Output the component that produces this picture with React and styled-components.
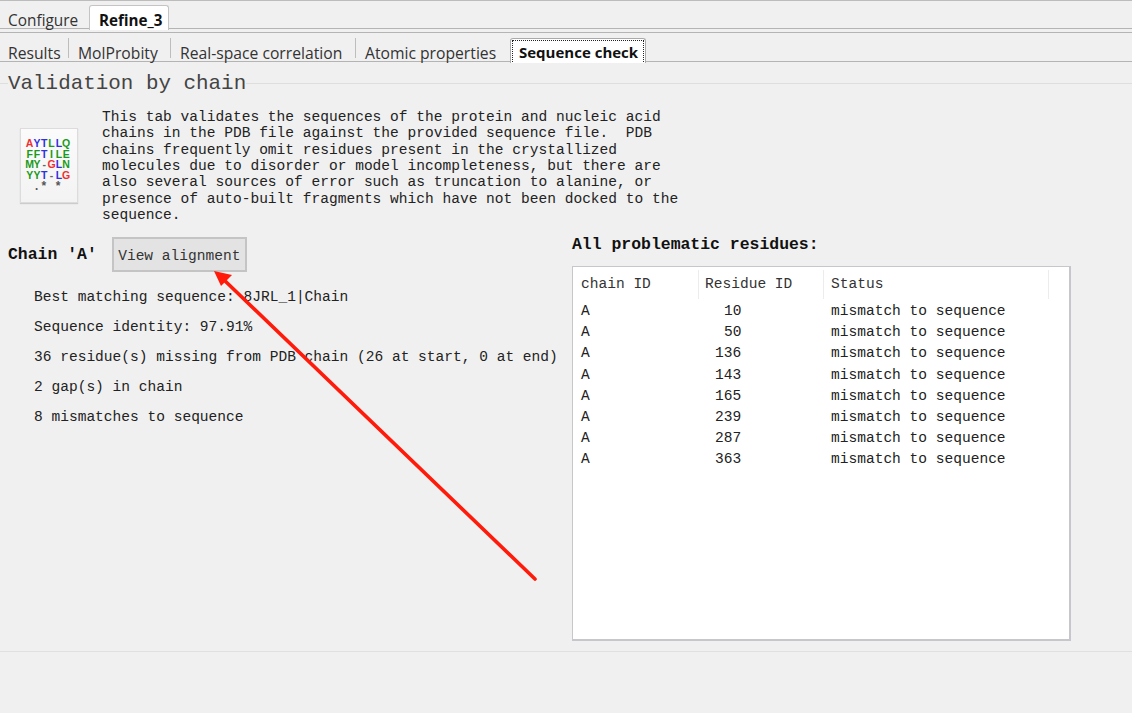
import React from "react";
import styled, { createGlobalStyle } from "styled-components";

const Global = createGlobalStyle`
  html, body { margin: 0; padding: 0; background: #f0f0f0; }
  * { box-sizing: border-box; }
`;
const Page = styled.div`
  position: relative; width: 1132px; height: 713px; overflow: hidden;
  background: #f0f0f0; font-family: "Liberation Mono", monospace; font-size: 14.55px; color: #222;
`;
const MainBar = styled.div`
  display: flex; align-items: flex-end; height: 29px;
  border-top: 1px solid #bcbcbc; border-bottom: 1px solid #b4b4b4;
  font-family: "Open Sans", sans-serif; font-size: 15.4px;
`;
const MainTab = styled.div`
  width: 89px; height: 22px; padding: 5px 0 0 8px; line-height: 20px; color: #333;
`;
const ActiveMainTab = styled.div`
  width: 80px; height: 25px; margin-bottom: -2px; padding: 4px 0 0 9px; line-height: 20px;
  font-weight: 700; font-size: 15.2px; color: #111;
  background: #fff; border: 1px solid #c4c4c4; border-bottom: 0; border-radius: 3px 3px 0 0;
`;
const SubBar = styled.div`
  display: flex; align-items: flex-end; height: 30px; margin-top: 3px;
  border-top: 1px solid #b4b4b4; border-bottom: 1px solid #b4b4b4;
  font-family: "Open Sans", sans-serif; font-size: 15.7px;
`;
const SubTab = styled.div`
  position: relative; height: 23px; padding: 5px 0 0 0; line-height: 21px; color: #333;
  width: ${p => p.$w}px; padding-left: ${p => p.$pad}px; white-space: nowrap;
  &::after { content: ""; position: absolute; right: 0; top: 0; height: 20px; width: 1px; background: #bdbdbd; }
  &:nth-child(4)::after { display: none; }
`;
const ActiveSubTab = styled.div`
  width: 136px; height: 25px; margin-bottom: -2px; padding: 1px; background: #fff;
  border: 1px solid #aaa; border-bottom: 0; border-radius: 3px 3px 0 0;
  font-weight: 700; font-size: 15px; color: #111;
`;
const FocusRing = styled.div`
  height: 100%; padding: 2px 0 0 6px; line-height: 19px; white-space: nowrap;
  border: 1px dotted #222; border-bottom: 0;
`;
const SectionHead = styled.div`
  display: flex; align-items: center; height: 41px; padding-top: 2px;
  &::before { content: ""; width: 8px; height: 1px; background: #dedede; }
  &::after { content: ""; flex: 1; height: 1px; background: #dedede; }
`;
const SectionTitle = styled.h2`
  margin: 0; font-family: "Liberation Mono", monospace; font-weight: 400; font-size: 20.9px; color: #444; line-height: 24px;
`;
const Intro = styled.div`
  display: flex; align-items: flex-start; padding: 6px 0 0 20px; height: 134px;
`;
const SeqIcon = styled.div`
  width: 58px; height: 75px; margin: 19px 24px 0 0; padding: 9px 0 0 5px; background: linear-gradient(#fbfbfb,#f3f3f3);
  border: 1px solid #dcdcdc; box-shadow: 0 1px 1px #ccc;
  font-family: "Liberation Sans", sans-serif; font-weight: 700; font-size: 10.5px; line-height: 10.5px;
`;
const SeqRow = styled.div`
  display: grid; grid-template-columns: repeat(6, 7.3px); justify-items: center;
`;
const Res = styled.span`
  color: ${p => p.$c};
`;
const Stars = styled.div`
  font-family: "Liberation Mono", monospace; font-weight: 700; font-size: 12px; color: #555; padding: 2px 0 0 7px; white-space: pre; line-height: 11px;
`;
const IntroText = styled.p`
  margin: 0; width: 600px; line-height: 16.33px; font-size: 14.55px; white-space: pre; color: #222;
`;
const Columns = styled.div`
  display: grid; grid-template-columns: 572px 499px; height: 415px; border-bottom: 1px solid #e0e0e0;
`;
const LeftCol = styled.div`
  padding-left: 8px;
`;
const ChainRow = styled.div`
  display: flex; align-items: center; gap: 15px; height: 35px;
`;
const ChainLabel = styled.strong`
  font-size: 16.45px; color: #111; margin-top: -1px; white-space: nowrap;
`;
const AlignButton = styled.button`
  width: 135px; height: 35px; padding: 2px 0 0; background: #e3e3e3; border: 2px solid #c4c4c4;
  font: inherit; color: #333;
`;
const Facts = styled.div`
  padding: 10px 0 0 26px;
`;
const Fact = styled.div`
  height: 30px; line-height: 30px; white-space: nowrap;
`;
const RightCol = styled.div`
  display: flex; flex-direction: column;
`;
const TableTitle = styled.strong`
  height: 29px; line-height: 16px; font-size: 16.45px; color: #111; white-space: nowrap;
`;
const Table = styled.div`
  height: 375px; background: #fff; border: solid #c6c6cc; border-width: 1px 2px 2px 1px; padding-top: 3px;
`;
const HeadRow = styled.div`
  display: grid; grid-template-columns: 126px 125px 225px; height: 31px;
`;
const BodyRow = styled.div`
  display: grid; grid-template-columns: 126px 125px 225px; height: 21.2px; line-height: 21.2px;
`;
const HeadCell = styled.div`
  height: 29px; padding-left: ${p => p.$pad}px; border-right: 1px solid #ececec; color: #333; line-height: 29px;
`;
const Cell = styled.div`
  padding-left: ${p => p.$pad}px; color: #222;
`;
const ArrowLayer = styled.svg`
  position: absolute; left: 0; top: 0; pointer-events: none;
`;

const R = "#f03030", B = "#3030e0", G = "#1a9a1a", D = "#666";
const rows = [
  [["A",R],["Y",B],["T",B],["L",G],["L",B],["Q",G]],
  [["F",G],["F",G],["T",B],["I",G],["L",G],["E",G]],
  [["M",G],["Y",G],["-",D],["G",R],["L",B],["N",G]],
  [["Y",G],["Y",G],["T",B],["-",D],["L",B],["G",R]],
];
const residues = [10, 50, 136, 143, 165, 239, 287, 363];
const facts = [
  "Best matching sequence: 8JRL_1|Chain",
  "Sequence identity: 97.91%",
  "36 residue(s) missing from PDB chain (26 at start, 0 at end)",
  "2 gap(s) in chain",
  "8 mismatches to sequence",
];
const intro = `This tab validates the sequences of the protein and nucleic acid
chains in the PDB file against the provided sequence file.  PDB
chains frequently omit residues present in the crystallized
molecules due to disorder or model incompleteness, but there are
also several sources of error such as truncation to alanine, or
presence of auto-built fragments which have not been docked to the
sequence.`;

export default function App() {
  return (
    <Page>
      <Global />
      <MainBar>
        <MainTab>Configure</MainTab>
        <ActiveMainTab>Refine_3</ActiveMainTab>
      </MainBar>
      <SubBar>
        <SubTab $w={69} $pad={8}>Results</SubTab>
        <SubTab $w={102} $pad={9}>MolProbity</SubTab>
        <SubTab $w={185} $pad={9}>Real-space correlation</SubTab>
        <SubTab $w={154} $pad={9}>Atomic properties</SubTab>
        <ActiveSubTab><FocusRing>Sequence check</FocusRing></ActiveSubTab>
      </SubBar>
      <SectionHead><SectionTitle>Validation by chain</SectionTitle></SectionHead>
      <Intro>
        <SeqIcon>
          {rows.map((r, i) => (
            <SeqRow key={i}>{r.map(([l, c], j) => <Res key={j} $c={c}>{l}</Res>)}</SeqRow>
          ))}
          <Stars>{".* *"}</Stars>
        </SeqIcon>
        <IntroText>{intro}</IntroText>
      </Intro>
      <Columns>
        <LeftCol>
          <ChainRow>
            <ChainLabel>Chain 'A'</ChainLabel>
            <AlignButton>View alignment</AlignButton>
          </ChainRow>
          <Facts>{facts.map(f => <Fact key={f}>{f}</Fact>)}</Facts>
        </LeftCol>
        <RightCol>
          <TableTitle>All problematic residues:</TableTitle>
          <Table>
            <HeadRow>
              <HeadCell $pad={8}>chain ID</HeadCell>
              <HeadCell $pad={6}>Residue ID</HeadCell>
              <HeadCell $pad={7}>Status</HeadCell>
            </HeadRow>
            {residues.map(n => (
              <BodyRow key={n}>
                <Cell $pad={8}>A</Cell>
                <Cell $pad={n < 100 ? 25 : 16}>{n}</Cell>
                <Cell $pad={7}>mismatch to sequence</Cell>
              </BodyRow>
            ))}
          </Table>
        </RightCol>
      </Columns>
      <ArrowLayer width="1132" height="713" viewBox="0 0 1132 713">
        <line x1="535" y1="579" x2="222" y2="278" stroke="#ff1a0a" strokeWidth="3.6" strokeLinecap="round" />
        <path d="M214 271 L232 275 L221 286 Z" fill="#ff1a0a" />
      </ArrowLayer>
    </Page>
  );
}
